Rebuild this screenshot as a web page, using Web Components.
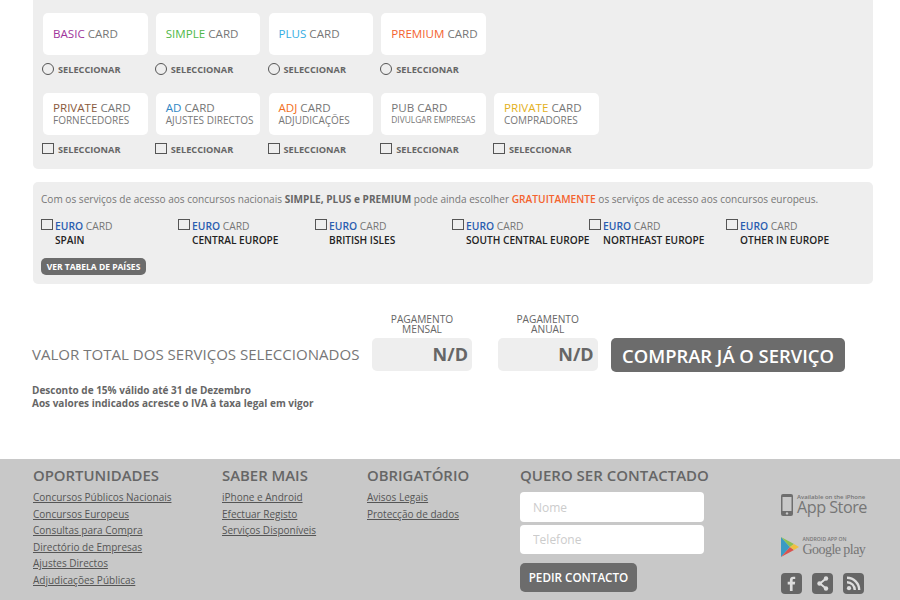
<!DOCTYPE html>
<html lang="pt">
<head>
<meta charset="utf-8">
<title>Serviços</title>
<style>
  html, body { margin: 0; padding: 0; background: #fff; }
  body { width: 900px; height: 600px; overflow: hidden; font-family: "Open Sans", sans-serif; }
</style>
</head>
<body>
<app-services></app-services>
<app-euro-panel></app-euro-panel>
<app-total></app-total>
<app-footer></app-footer>

<script>
const services = [
  { name: 'BASIC', color: '#a0359c', type: 'radio' },
  { name: 'SIMPLE', color: '#4fb848', type: 'radio' },
  { name: 'PLUS', color: '#35ade2', type: 'radio' },
  { name: 'PREMIUM', color: '#f4632e', type: 'radio' },
  { name: 'PRIVATE', color: '#8a5a3c', sub: 'FORNECEDORES', type: 'check' },
  { name: 'AD', color: '#2e86c4', sub: 'AJUSTES DIRECTOS', type: 'check' },
  { name: 'ADJ', color: '#f26f21', sub: 'ADJUDICAÇÕES', type: 'check' },
  { name: 'PUB', color: '#777', sub: 'DIVULGAR EMPRESAS', small: true, type: 'check' },
  { name: 'PRIVATE', color: '#e3b021', sub: 'COMPRADORES', type: 'check' }
];

const europe = ['SPAIN', 'CENTRAL EUROPE', 'BRITISH ISLES', 'SOUTH CENTRAL EUROPE', 'NORTHEAST EUROPE', 'OTHER IN EUROPE'];

class ServiceCard extends HTMLElement {
  constructor() {
    super();
    const color = this.getAttribute('color');
    const name = this.getAttribute('name');
    const sub = this.getAttribute('sub');
    const type = this.getAttribute('type');
    const small = this.hasAttribute('small');

    this.attachShadow({ mode: 'open' }).innerHTML = `
      <style>
        :host { display: block; width: 112.75px; }
        .card {
          box-sizing: border-box;
          width: 104.5px;
          height: 42px;
          background: #fff;
          border-radius: 5px;
          padding: 0 0 2px 10px;
          display: flex;
          flex-direction: column;
          justify-content: center;
          color: #777;
          font-size: 11.6px;
          line-height: 13px;
          white-space: nowrap;
        }
        .sub { font-size: 10px; line-height: 12px; color: #777; }
        .sub.small { font-size: 8.4px; }
        b { font-weight: 400; color: ${color}; }
        .select {
          display: flex;
          height: 14px;
          line-height: 14px;
          margin: 8px 0 0 -1px;
          font-size: 9.2px;
          font-weight: 700;
          color: #666;
          white-space: nowrap;
        }
        .mark {
          box-sizing: border-box;
          width: 12px;
          margin-right: 4px;
          border: 1px solid #555;
        }
        .radio { height: 12px; border-radius: 50%; }
        .check { height: 11px; }
      </style>
      <div class="card">
        <div><b>${name}</b> CARD</div>
        ${sub ? `<div class="sub${small ? ' small' : ''}">${sub}</div>` : ''}
      </div>
      <div class="select"><span class="mark ${type}"></span>SELECCIONAR</div>
    `;
  }
}

class AppServices extends HTMLElement {
  constructor() {
    super();
    this.attachShadow({ mode: 'open' }).innerHTML = `
      <style>
        :host {
          display: block;
          box-sizing: border-box;
          width: 840px;
          height: 169px;
          margin-left: 33px;
          padding: 13px 10px 0;
          background: #eee;
          border-radius: 0 0 5px 5px;
        }
        .row { display: flex; margin-bottom: 16px; }
      </style>
      <div class="row" id="plans"></div>
      <div class="row" id="extras"></div>
    `;
    const toCard = s => `<service-card name="${s.name}" color="${s.color}" type="${s.type}"
      ${s.sub ? `sub="${s.sub}"` : ''} ${s.small ? 'small' : ''}></service-card>`;
    this.shadowRoot.getElementById('plans').innerHTML = services.slice(0, 4).map(toCard).join('');
    this.shadowRoot.getElementById('extras').innerHTML = services.slice(4).map(toCard).join('');
  }
}

class AppEuroPanel extends HTMLElement {
  constructor() {
    super();
    const items = europe.map(region => `
      <div class="item">
        <span class="mark"></span>
        <div>
          <div class="euro"><b>EURO</b> CARD</div>
          <div class="region">${region}</div>
        </div>
      </div>
    `).join('');

    this.attachShadow({ mode: 'open' }).innerHTML = `
      <style>
        :host {
          display: block;
          box-sizing: border-box;
          width: 840px;
          height: 102px;
          margin: 13px 0 0 33px;
          padding: 10px 8px 0;
          background: #eee;
          border-radius: 5px;
        }
        p {
          margin: 0;
          font-size: 10.09px;
          line-height: 14px;
          color: #777;
          white-space: nowrap;
        }
        p strong { font-weight: 700; color: #666; }
        p em { font-style: normal; font-weight: 600; color: #f4632e; font-size: 10.2px; }
        .grid { display: grid; grid-template-columns: repeat(6, 137px); margin-top: 13px; }
        .item { display: flex; white-space: nowrap; }
        .mark {
          flex: none;
          box-sizing: border-box;
          width: 12px;
          height: 11px;
          margin: 0 2px 0 0;
          border: 1px solid #555;
        }
        .euro { font-size: 10.3px; line-height: 14px; color: #777; }
        .euro b { font-weight: 600; color: #2a5db0; }
        .region { font-size: 10.15px; line-height: 14px; font-weight: 600; color: #222; }
        button {
          display: block;
          width: 105px;
          height: 17px;
          margin-top: 11px;
          padding: 0;
          border: 0;
          border-radius: 5px;
          background: #6c6c6c;
          color: #fff;
          font: 700 8.5px "Open Sans", sans-serif;
        }
      </style>
      <p>Com os serviços de acesso aos concursos nacionais <strong>SIMPLE, PLUS e PREMIUM</strong> pode ainda escolher <em>GRATUITAMENTE</em> os serviços de acesso aos concursos europeus.</p>
      <div class="grid">${items}</div>
      <button type="button">VER TABELA DE PAÍSES</button>
    `;
  }
}

class PriceBox extends HTMLElement {
  constructor() {
    super();
    const period = this.getAttribute('period');
    this.attachShadow({ mode: 'open' }).innerHTML = `
      <style>
        :host { display: block; width: 100px; text-align: center; }
        .label { font-size: 10.2px; line-height: 10px; color: #666; margin-bottom: 4px; }
        .value {
          box-sizing: border-box;
          height: 33px;
          padding: 0 4px;
          background: #eee;
          border-radius: 5px;
          color: #666;
          font-size: 18px;
          font-weight: 700;
          line-height: 33px;
          text-align: right;
        }
      </style>
      <div class="label">PAGAMENTO<br>${period}</div>
      <div class="value">N/D</div>
    `;
  }
}

class AppTotal extends HTMLElement {
  constructor() {
    super();
    this.attachShadow({ mode: 'open' }).innerHTML = `
      <style>
        :host { display: block; margin: 30px 0 0 32px; height: 145px; }
        .line { display: flex; align-items: flex-end; }
        .title { width: 340px; height: 33px; line-height: 33px; font-size: 15.05px; color: #777; white-space: nowrap; }
        price-box { margin-right: 25.7px; }
        price-box:last-of-type { margin-right: 13.3px; }
        button {
          box-sizing: border-box;
          height: 34px;
          width: 234px;
          margin-bottom: -1px;
          border: 0;
          border-radius: 5px;
          background: #6c6c6c;
          color: #fff;
          font: 600 18.4px "Open Sans", sans-serif;
          white-space: nowrap;
          padding: 0;
        }
        .note { margin-top: 13px; font-size: 10px; font-weight: 700; line-height: 13px; color: #666; }
      </style>
      <div class="line">
        <div class="title">VALOR TOTAL DOS SERVIÇOS SELECCIONADOS</div>
        <price-box period="MENSAL"></price-box>
        <price-box period="ANUAL"></price-box>
        <button type="button">COMPRAR JÁ O SERVIÇO</button>
      </div>
      <div class="note">Desconto de 15% válido até 31 de Dezembro<br>Aos valores indicados acresce o IVA à taxa legal em vigor</div>
    `;
  }
}

class FooterColumn extends HTMLElement {
  constructor() {
    super();
    this.attachShadow({ mode: 'open' }).innerHTML = `
      <style>
        :host { display: block; }
        h3 { margin: 0 0 4px; font-size: 14.9px; line-height: 20px; font-weight: 600; color: #666; white-space: nowrap; }
        ::slotted(a) {
          display: block;
          font-size: 10px;
          line-height: 16.6px;
          color: #555;
          text-decoration: underline;
          white-space: nowrap;
        }
      </style>
      <h3>${this.getAttribute('title')}</h3>
      <slot></slot>
    `;
  }
}

class ContactForm extends HTMLElement {
  constructor() {
    super();
    this.attachShadow({ mode: 'open' }).innerHTML = `
      <style>
        :host { display: block; }
        h3 { margin: 0 0 7px; font-size: 15px; line-height: 20px; font-weight: 600; color: #666; white-space: nowrap; }
        input {
          display: block;
          box-sizing: border-box;
          width: 184px;
          height: 30px;
          margin-bottom: 3px;
          padding: 0 13px;
          border: 0;
          border-radius: 4px;
          background: #fff;
          font: 12px "Open Sans", sans-serif;
        }
        input + input { height: 29px; }
        input::placeholder { color: #ccc; opacity: 1; }
        button {
          display: block;
          width: 117px;
          height: 29px;
          margin-top: 9px;
          padding: 0 0 2px;
          border: 0;
          border-radius: 5px;
          background: #6c6c6c;
          color: #fff;
          font: 600 11.7px "Open Sans", sans-serif;
        }
      </style>
      <h3>QUERO SER CONTACTADO</h3>
      <input placeholder="Nome">
      <input placeholder="Telefone">
      <button type="button">PEDIR CONTACTO</button>
    `;
  }
}

class StoreLinks extends HTMLElement {
  constructor() {
    super();
    this.attachShadow({ mode: 'open' }).innerHTML = `
      <style>
        :host { display: block; width: 90px; color: #767676; }
        .badge { display: flex; white-space: nowrap; }
        .apple { height: 22px; }
        .apple svg { margin-right: 4px; flex: none; }
        .tiny { font-size: 6px; line-height: 6px; font-weight: 600; }
        .big { font-size: 16.2px; line-height: 15px; font-weight: 400; letter-spacing: -0.5px; }
        .play { height: 20px; margin-top: 21px; }
        .play svg { margin-right: 3.5px; flex: none; }
        .play .tiny { font-size: 5.1px; line-height: 5px; }
        .play .big { font-family: "Liberation Serif", serif; font-size: 14px; line-height: 15px; letter-spacing: -0.55px; }
        .social { display: flex; gap: 10px; margin-top: 16px; }
        .social svg { display: block; }
      </style>
      <div class="badge apple">
        <svg width="12" height="22" viewBox="0 0 12 22"><rect width="12" height="22" rx="2" fill="#6e6e6e"/><rect x="1.5" y="3" width="9" height="14" fill="#c8c8c8"/><circle cx="6" cy="19.4" r="1.2" fill="#c8c8c8"/></svg>
        <div><div class="tiny">Available on the iPhone</div><div class="big">App Store</div></div>
      </div>
      <div class="badge play">
        <svg width="18" height="20" viewBox="0 0 18 20">
          <polygon points="0,0 9,10 0,20" fill="#3a9bc4"/>
          <polygon points="0,0 13,7 9,10" fill="#8cc152"/>
          <polygon points="0,20 13,13 9,10" fill="#d9534f"/>
          <polygon points="13,7 18,10 13,13 9,10" fill="#f0c040"/>
        </svg>
        <div><div class="tiny">ANDROID APP ON</div><div class="big">Google play</div></div>
      </div>
      <div class="social">
        <svg width="21" height="21" viewBox="0 0 21 21"><rect width="21" height="21" rx="4" fill="#666"/><path d="M11.6 18v-6.6h2.2l.4-2.6h-2.6V7.3c0-.8.3-1.2 1.2-1.2h1.4V3.8c-.5 0-1.2-.1-2-.1-2 0-3.3 1.2-3.3 3.4v1.7H6.7v2.6h2.2V18z" fill="#ddd"/></svg>
        <svg width="21" height="21" viewBox="0 0 21 21"><rect width="21" height="21" rx="4" fill="#666"/><path d="M14 5.5 8 10.5l6 5" fill="none" stroke="#ddd" stroke-width="2"/><circle cx="14" cy="5.5" r="2.2" fill="#ddd"/><circle cx="7.5" cy="10.5" r="2.2" fill="#ddd"/><circle cx="14" cy="15.5" r="2.2" fill="#ddd"/></svg>
        <svg width="21" height="21" viewBox="0 0 21 21"><rect width="21" height="21" rx="4" fill="#666"/><circle cx="6" cy="15.2" r="2.1" fill="#ddd"/><path d="M4 9.2a7.8 7.8 0 0 1 7.8 7.8M4 4.8A12.2 12.2 0 0 1 16.2 17" fill="none" stroke="#ddd" stroke-width="2.4"/></svg>
      </div>
    `;
  }
}

class AppFooter extends HTMLElement {
  constructor() {
    super();
    this.attachShadow({ mode: 'open' }).innerHTML = `
      <style>
        :host {
          display: flex;
          box-sizing: border-box;
          height: 141px;
          padding: 6px 0 0 33px;
          background: #c8c8c8;
          overflow: hidden;
        }
        a { color: #555; }
        .c1 { width: 189px; }
        .c2 { width: 145px; }
        .c3 { width: 153px; }
        .c4 { width: 261px; }
        store-links { margin-top: 29px; }
      </style>
      <footer-column class="c1" title="OPORTUNIDADES">
        <a href="#">Concursos Públicos Nacionais</a>
        <a href="#">Concursos Europeus</a>
        <a href="#">Consultas para Compra</a>
        <a href="#">Directório de Empresas</a>
        <a href="#">Ajustes Directos</a>
        <a href="#">Adjudicações Públicas</a>
      </footer-column>
      <footer-column class="c2" title="SABER MAIS">
        <a href="#">iPhone e Android</a>
        <a href="#">Efectuar Registo</a>
        <a href="#">Serviços Disponíveis</a>
      </footer-column>
      <footer-column class="c3" title="OBRIGATÓRIO">
        <a href="#">Avisos Legais</a>
        <a href="#">Protecção de dados</a>
      </footer-column>
      <contact-form class="c4"></contact-form>
      <store-links></store-links>
    `;
  }
}

customElements.define('service-card', ServiceCard);
customElements.define('app-services', AppServices);
customElements.define('app-euro-panel', AppEuroPanel);
customElements.define('price-box', PriceBox);
customElements.define('app-total', AppTotal);
customElements.define('footer-column', FooterColumn);
customElements.define('contact-form', ContactForm);
customElements.define('store-links', StoreLinks);
customElements.define('app-footer', AppFooter);
</script>
</body>
</html>
